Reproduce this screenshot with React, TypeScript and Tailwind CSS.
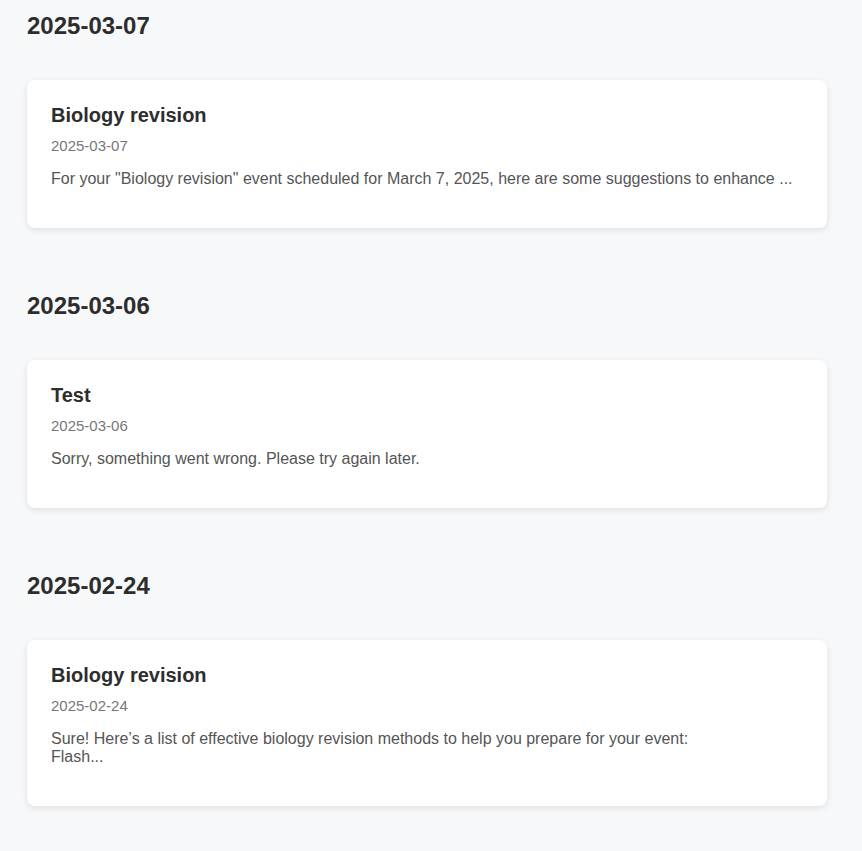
import React from "react";

const sections = [
  {
    date: "2025-03-07",
    title: "Biology revision",
    body: 'For your "Biology revision" event scheduled for March 7, 2025, here are some suggestions to enhance ...',
  },
  {
    date: "2025-03-06",
    title: "Test",
    body: "Sorry, something went wrong. Please try again later.",
  },
  {
    date: "2025-02-24",
    title: "Biology revision",
    body: "Sure! Here’s a list of effective biology revision methods to help you prepare for your event:\nFlash...",
  },
];

export default function App() {
  return (
    <div
      className="min-h-[851px] w-full bg-[#f7f8fa] px-[27px] pt-[12px] pb-[46px]"
      style={{ fontFamily: '"Liberation Sans", Arial, sans-serif' }}
    >
      <div className="flex w-[800px] flex-col gap-[64px]">
        {sections.map((s, i) => (
          <section key={i} className="flex flex-col gap-[40px]">
            <h2 className="text-[24px] leading-[27.6px] font-bold text-[#2d2d2d]">
              {s.date}
            </h2>
            <div className="rounded-[8px] bg-white px-[24px] pt-[24px] pb-[40px] shadow-[0_2px_6px_rgba(0,0,0,0.1)]">
              <h3 className="text-[20px] leading-[23px] font-bold text-[#2d2d2d]">
                {s.title}
              </h3>
              <div className="mt-[10px] text-[15px] leading-[17px] text-[#777]">
                {s.date}
              </div>
              <p className="mt-[16px] whitespace-pre-line text-[16px] leading-[18.4px] text-[#555]">
                {s.body}
              </p>
            </div>
          </section>
        ))}
      </div>
    </div>
  );
}
